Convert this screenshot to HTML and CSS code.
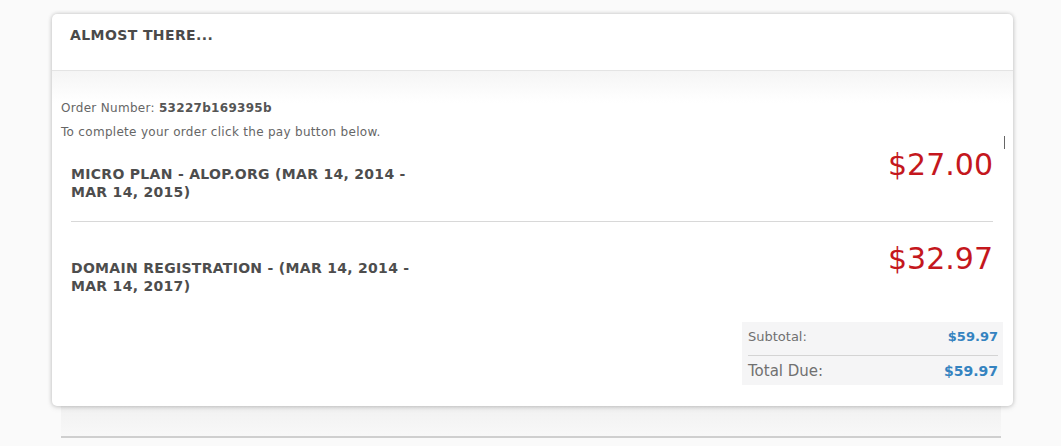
FILE: index.html
```html
<!DOCTYPE html>
<html>
<head>
<meta charset="utf-8">
<link rel="stylesheet" href="styles.css">
</head>
<body>
<div class="page">
  <div class="card">
    <div class="card-head">
      <h2 class="card-title">ALMOST THERE...</h2>
    </div>
    <div class="card-body">
      <p class="info">Order Number: <strong>53227b169395b</strong></p>
      <p class="info">To complete your order click the pay button below.</p>
      <div class="items">
        <div class="item">
          <div class="item-name">MICRO PLAN - ALOP.ORG (MAR 14, 2014 - MAR 14, 2015)</div>
          <div class="item-price">$27.00</div>
        </div>
        <div class="item">
          <div class="item-name">DOMAIN REGISTRATION - (MAR 14, 2014 - MAR 14, 2017)</div>
          <div class="item-price">$32.97</div>
        </div>
      </div>
      <div class="totals-wrap">
        <div class="totals">
          <div class="total-row total-sub">
            <span class="total-label">Subtotal:</span>
            <span class="total-value">$59.97</span>
          </div>
          <div class="total-row total-due">
            <span class="total-label">Total Due:</span>
            <span class="total-value">$59.97</span>
          </div>
        </div>
      </div>
    </div>
    <span class="caret"></span>
  </div>
  <div class="footer-band"></div>
</div>
</body>
</html>
```

FILE: styles.css
```css
html, body {
  margin: 0;
  padding: 0;
}
body {
  background: #fafafa;
  font-family: "DejaVu Sans", Verdana, sans-serif;
  color: #666;
  width: 1061px;
  height: 446px;
  overflow: hidden;
}
.page {
  padding: 14px 48px 0 52px;
}
.card {
  position: relative;
  background: #fff;
  border-radius: 5px;
  box-shadow: 0 0 4px rgba(0, 0, 0, 0.22), 0 2px 6px rgba(0, 0, 0, 0.08);
  height: 392px;
}
.card-head {
  height: 57px;
  border-bottom: 1px solid #e4e4e4;
  padding: 0 18px;
  box-sizing: border-box;
}
.card-title {
  margin: 0;
  padding-top: 9px;
  font-size: 14px;
  line-height: 24px;
  font-weight: bold;
  letter-spacing: 0.4px;
  color: #4a4a4a;
}
.card-body {
  background: linear-gradient(#f5f5f5 0, #fff 32px);
  padding: 25px 20px 0 9px;
}
.info {
  margin: 0;
  font-size: 12px;
  line-height: 24px;
  letter-spacing: 0.3px;
  color: #666;
}
.info strong {
  color: #555;
}
.items {
  padding: 3px 0 0 10px;
}
.item {
  display: flex;
  justify-content: space-between;
  align-items: flex-start;
  padding: 0 0 20px;
}
.item + .item {
  border-top: 1px solid #d8d8d8;
  padding-top: 19px;
}
.item-name {
  width: 360px;
  margin-top: 18px;
  font-size: 14px;
  line-height: 18px;
  font-weight: bold;
  letter-spacing: 0.3px;
  color: #4d4d4d;
}
.item-price {
  font-size: 30px;
  line-height: 36px;
  color: #c4171d;
}
.totals-wrap {
  display: flex;
  justify-content: flex-end;
  margin-right: -10px;
  margin-top: 7px;
}
.totals {
  width: 261px;
  background: #f5f5f6;
  padding: 0 5px 0 6px;
  box-sizing: border-box;
}
.total-row {
  display: flex;
  justify-content: space-between;
  align-items: center;
  font-size: 13px;
}
.total-sub {
  height: 33px;
  padding-bottom: 4px;
  box-sizing: border-box;
}
.total-due {
  border-top: 1px solid #d4d4d4;
  height: 29px;
  font-size: 15px;
}
.total-due .total-value {
  font-size: 14px;
}
.total-label {
  color: #707070;
}
.total-value {
  font-weight: bold;
  color: #3583c0;
}
.caret {
  position: absolute;
  left: 952px;
  top: 122px;
  width: 1px;
  height: 13px;
  background: #666;
}
.footer-band {
  margin: 0 12px 0 9px;
  height: 30px;
  background: linear-gradient(#f1f1f1, #f8f8f8);
  border-bottom: 2px solid #cfcfcf;
}
```
